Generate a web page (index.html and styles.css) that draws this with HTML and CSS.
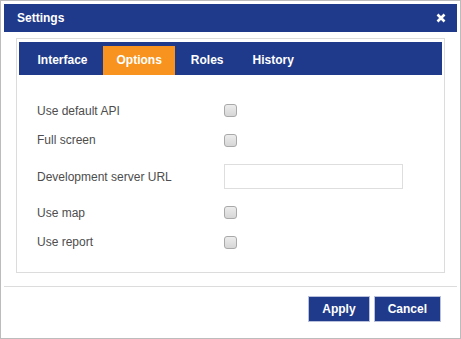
FILE: index.html
```html
<!DOCTYPE html>
<html>
<head>
<meta charset="utf-8">
<link rel="stylesheet" href="styles.css">
</head>
<body>
<div class="dialog">
  <div class="titlebar">
    <span class="title">Settings</span>
    <svg class="close" width="10" height="10" viewBox="0 0 10 10"><path d="M1.5 1.5 L8.5 8.5 M8.5 1.5 L1.5 8.5" stroke="#fff" stroke-width="2.6" stroke-linecap="butt"/></svg>
  </div>
  <div class="panel">
    <div class="tabs">
      <div class="tab">Interface</div>
      <div class="tab active">Options</div>
      <div class="tab">Roles</div>
      <div class="tab">History</div>
    </div>
    <div class="form">
      <div class="row"><span class="label">Use default API</span><span class="check"></span></div>
      <div class="row"><span class="label">Full screen</span><span class="check"></span></div>
      <div class="row tall"><span class="label">Development server URL</span><span class="input"></span></div>
      <div class="row"><span class="label">Use map</span><span class="check"></span></div>
      <div class="row"><span class="label">Use report</span><span class="check"></span></div>
    </div>
  </div>
  <div class="sep"></div>
  <div class="footer">
    <button class="btn">Apply</button>
    <button class="btn">Cancel</button>
  </div>
</div>
</body>
</html>
```
FILE: styles.css
```css
html, body {
  margin: 0;
  padding: 0;
  background: #fff;
}
body {
  font-family: "Liberation Sans", Arial, sans-serif;
}
.dialog {
  box-sizing: border-box;
  width: 461px;
  height: 339px;
  border: 1px solid #bcbcbc;
  padding: 3px;
  background: #fff;
  display: flex;
  flex-direction: column;
}
.titlebar {
  height: 28px;
  background: #1f3a8a;
  color: #fff;
  display: flex;
  align-items: center;
  justify-content: space-between;
  padding: 0 11px 0 13px;
  flex: none;
}
.title {
  font-weight: bold;
  font-size: 12px;
}
.close {
  display: block;
}
.panel {
  margin: 6px 12px 0 12px;
  border: 1px solid #dcdcdc;
  padding: 3px 2px 0 2px;
  height: 235px;
  box-sizing: border-box;
  flex: none;
}
.tabs {
  height: 33px;
  background: #1f3a8a;
  display: flex;
  align-items: flex-end;
  padding-left: 5px;
  box-sizing: border-box;
}
.tab {
  height: 29px;
  line-height: 29px;
  padding: 0 13.5px;
  margin-right: 2px;
  color: #fff;
  font-weight: bold;
  font-size: 12px;
}
.tab.active {
  background: #f7931e;
}
.form {
  padding: 21px 0 0 18px;
}
.row {
  display: grid;
  grid-template-columns: 187px auto;
  align-items: center;
  height: 29.5px;
}
.row.tall {
  height: 43px;
}
.label {
  font-size: 12px;
  color: #4d4d4d;
}
.check {
  width: 11px;
  height: 11px;
  border: 1px solid #a9a9a9;
  border-radius: 3px;
  background: linear-gradient(#ececec, #d6d6d6);
}
.input {
  width: 179px;
  height: 25px;
  box-sizing: border-box;
  border: 1px solid #dedede;
  background: #fff;
}
.sep {
  margin-top: 13px;
  height: 1px;
  background: #dcdcdc;
  flex: none;
}
.footer {
  display: flex;
  justify-content: flex-end;
  gap: 4px;
  padding: 9px 16px 0 0;
}
.btn {
  height: 26px;
  padding: 0 13px;
  border: 1px solid #b8c0dc;
  background: #1f3a8a;
  color: #fff;
  font-family: "Liberation Sans", Arial, sans-serif;
  font-weight: bold;
  font-size: 12px;
  margin: 0;
}
```
